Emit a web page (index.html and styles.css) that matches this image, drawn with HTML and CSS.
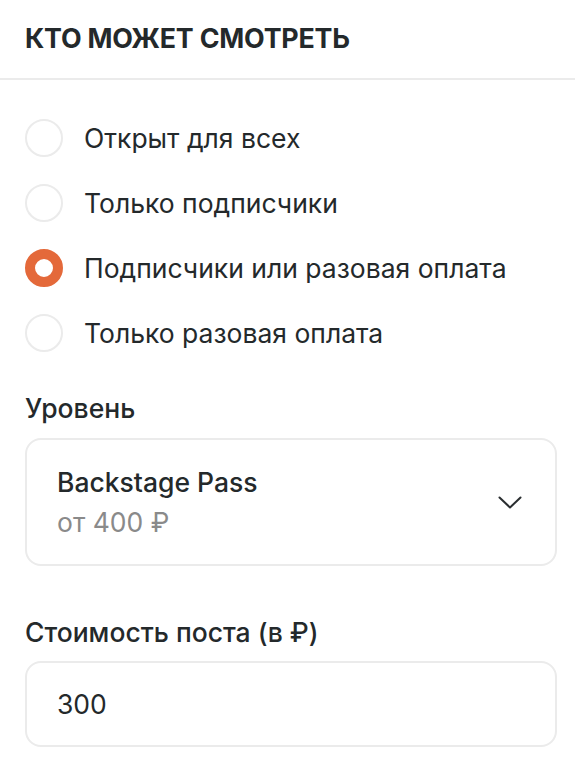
FILE: index.html
```html
<!DOCTYPE html>
<html lang="ru">
<head>
    <meta charset="UTF-8">
    <meta name="viewport" content="width=device-width, initial-scale=1.0">
    <title>Кто может смотреть</title>
    <link rel="stylesheet" href="styles.css">
</head>
<body>
    <header class="panel-header">
        <h1>КТО МОЖЕТ СМОТРЕТЬ</h1>
    </header>
    <main class="panel-body">
        <ul class="radio-list">
            <li class="radio-item"><span class="radio"></span>Открыт для всех</li>
            <li class="radio-item"><span class="radio"></span>Только подписчики</li>
            <li class="radio-item"><span class="radio checked"></span>Подписчики или разовая оплата</li>
            <li class="radio-item"><span class="radio"></span>Только разовая оплата</li>
        </ul>

        <div class="field">
            <div class="field-label">Уровень</div>
            <div class="select-box">
                <div class="select-text">
                    <div class="select-title">Backstage Pass</div>
                    <div class="select-sub">от 400 ₽</div>
                </div>
                <svg class="chevron" width="24" height="13" viewBox="0 0 24 13">
                    <path d="M1.5 1.5 L12 11.5 L22.5 1.5" fill="none" stroke="#2a2e30" stroke-width="2" stroke-linecap="round" stroke-linejoin="round"/>
                </svg>
            </div>
        </div>

        <div class="field field-price">
            <div class="field-label">Стоимость поста (в ₽)</div>
            <div class="input-box">300</div>
        </div>
    </main>
</body>
</html>
```
FILE: styles.css
```css
body {
    font-family: Inter, "Noto Sans", sans-serif;
    margin: 0;
    padding: 0;
    background-color: #fff;
    color: #24292b;
}
.panel-header {
    height: 78px;
    border-bottom: 2px solid #ebebeb;
    padding: 0 25px;
    display: flex;
    align-items: center;
}
.panel-header h1 {
    margin: 0 0 2px;
    font-size: 26.8px;
    font-weight: 700;
    letter-spacing: -0.2px;
}
.panel-body {
    padding: 25px 18px 0 25px;
}
.radio-list {
    list-style: none;
    margin: 0;
    padding: 0;
}
.radio-item {
    display: flex;
    align-items: center;
    gap: 21px;
    height: 65px;
    font-size: 26.5px;
}
.radio {
    width: 38px;
    height: 38px;
    box-sizing: border-box;
    border: 2px solid #ebebeb;
    border-radius: 50%;
}
.radio.checked {
    border: 10px solid #e4693a;
}
.field {
    margin-top: 27px;
}
.field-price {
    margin-top: 50px;
}
.field-label {
    font-size: 26.5px;
    line-height: 32px;
    font-weight: 500;
    margin-bottom: 14px;
}
.field-price .field-label {
    margin-bottom: 13px;
}
.select-box, .input-box {
    border: 2px solid #ebebeb;
    border-radius: 16px;
    box-sizing: border-box;
}
.select-box {
    height: 128px;
    display: flex;
    align-items: center;
    justify-content: space-between;
    padding: 0 33px 0 30px;
}
.select-title {
    font-size: 26.5px;
    line-height: 32px;
    font-weight: 500;
}
.select-sub {
    font-size: 26.5px;
    line-height: 32px;
    color: #8a8a8a;
    margin-top: 8px;
}
.input-box {
    height: 86px;
    display: flex;
    align-items: center;
    padding: 0 30px;
    font-size: 26.5px;
}
```
